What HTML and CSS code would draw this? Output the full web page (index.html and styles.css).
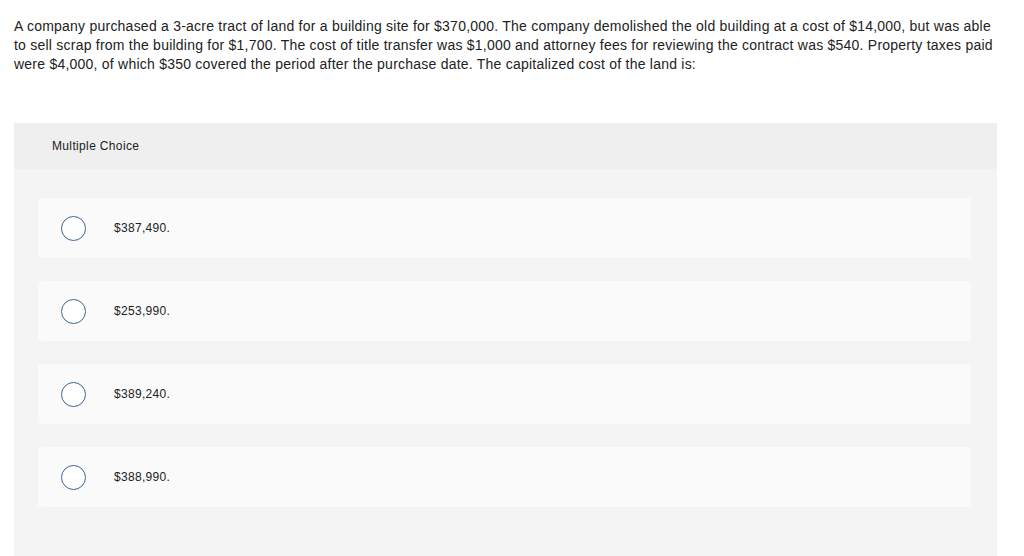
FILE: index.html
```html
<!DOCTYPE html>
<html lang="en">
<head>
<meta charset="utf-8">
<title>Multiple Choice</title>
<link rel="stylesheet" href="styles.css">
</head>
<body>
<p class="question">A company purchased a 3-acre tract of land for a building site for $370,000. The company demolished the old building at a cost of $14,000, but was able to sell scrap from the building for $1,700. The cost of title transfer was $1,000 and attorney fees for reviewing the contract was $540. Property taxes paid were $4,000, of which $350 covered the period after the purchase date. The capitalized cost of the land is:</p>
<section class="panel">
  <header class="panel-head">Multiple Choice</header>
  <div class="options">
    <label class="option"><span class="radio"></span><span class="answer">$387,490.</span></label>
    <label class="option"><span class="radio"></span><span class="answer">$253,990.</span></label>
    <label class="option"><span class="radio"></span><span class="answer">$389,240.</span></label>
    <label class="option"><span class="radio"></span><span class="answer">$388,990.</span></label>
  </div>
</section>
</body>
</html>
```
FILE: styles.css
```css
html, body {
  margin: 0;
  padding: 0;
  background: #ffffff;
  overflow: hidden;
}
body {
  font-family: "Liberation Sans", Arial, sans-serif;
  color: #222222;
}
.question {
  margin: 0;
  padding: 17px 14px 0 14px;
  width: 990px;
  font-size: 14px;
  line-height: 19px;
  letter-spacing: 0.23px;
}
.panel {
  margin: 49px 0 0 14px;
  width: 983px;
  background: #f4f4f4;
  padding-bottom: 60px;
}
.panel-head {
  height: 46px;
  display: flex;
  align-items: center;
  padding-left: 38px;
  background: #efefef;
  font-size: 12px;
  letter-spacing: 0.35px;
}
.options {
  display: flex;
  flex-direction: column;
  gap: 23px;
  padding: 29px 26px 0 24px;
}
.option {
  height: 60px;
  display: flex;
  align-items: center;
  padding-left: 23px;
  background: #fafafa;
  border-radius: 3px;
}
.radio {
  width: 23px;
  height: 23px;
  border: 1.3px solid #3d6596;
  border-radius: 50%;
  background: #ffffff;
  flex: none;
}
.answer {
  margin-left: 28px;
  font-size: 12px;
  letter-spacing: 0.3px;
}
```
